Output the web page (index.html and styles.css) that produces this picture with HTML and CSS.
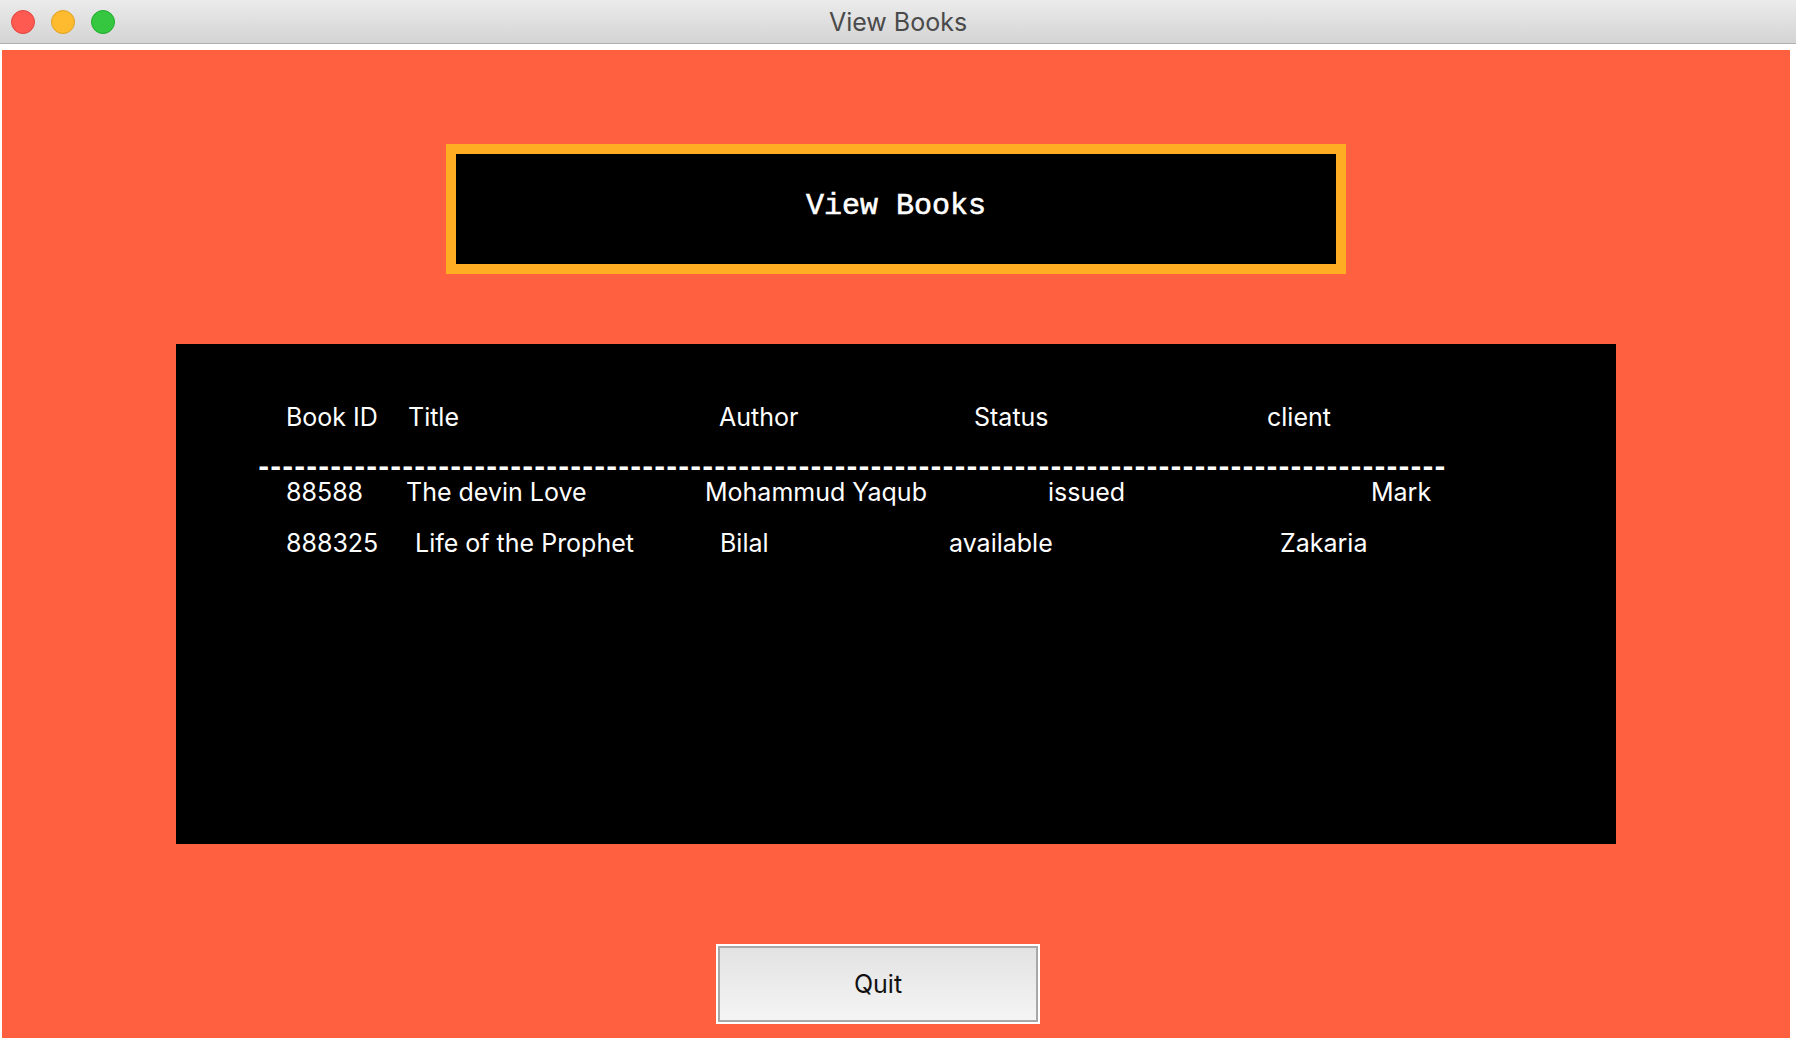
FILE: index.html
```html
<!DOCTYPE html>
<html>
<head>
<meta charset="utf-8">
<title>View Books</title>
<link rel="stylesheet" href="styles.css">
</head>
<body>
<div class="window">
  <div class="titlebar">
    <div class="lights">
      <span class="light red"></span>
      <span class="light yellow"></span>
      <span class="light green"></span>
    </div>
    <div class="wintitle">View Books</div>
  </div>
  <div class="canvas">
    <div class="heading"><span class="heading-text">View Books</span></div>
    <div class="table">
      <div class="row row-head">
        <span>Book ID</span><span>Title</span><span>Author</span><span>Status</span><span>client</span>
      </div>
      <div class="dashes">---------------------------------------------------------------------------------------------------</div>
      <div class="row row-1">
        <span>88588</span><span>The devin Love</span><span>Mohammud Yaqub</span><span>issued</span><span>Mark</span>
      </div>
      <div class="row row-2">
        <span>888325</span><span>Life of the Prophet</span><span>Bilal</span><span>available</span><span>Zakaria</span>
      </div>
    </div>
    <button class="quit">Quit</button>
  </div>
</div>
</body>
</html>
```
FILE: styles.css
```css
html, body {
  margin: 0;
  padding: 0;
  background: #ffffff;
}
.window {
  width: 1796px;
  height: 1044px;
  background: #ffffff;
  overflow: hidden;
}
.titlebar {
  position: relative;
  height: 43px;
  background: linear-gradient(#ebebeb, #d4d4d4);
  border-bottom: 1px solid #b0b0b0;
  display: flex;
  align-items: center;
  justify-content: center;
}
.lights {
  position: absolute;
  left: 11px;
  top: 10px;
  display: flex;
  gap: 16px;
}
.light {
  width: 22px;
  height: 22px;
  border-radius: 50%;
  display: block;
}
.red { background: #ff5a52; border: 1px solid #e0443e; }
.yellow { background: #ffbb2f; border: 1px solid #dea123; }
.green { background: #35c73f; border: 1px solid #1eab2b; }
.wintitle {
  font-family: Inter, "Noto Sans", sans-serif;
  font-size: 25px;
  color: #4a4a4a;
  padding-top: 1px;
  line-height: 43px;
}
.canvas {
  margin: 6px 6px 0 2px;
  height: 988px;
  box-sizing: border-box;
  background: #ff603f;
  display: flex;
  flex-direction: column;
  align-items: flex-start;
  padding-top: 94px;
}
.heading {
  margin-left: 444px;
  width: 900px;
  height: 130px;
  box-sizing: border-box;
  border: 10px solid #ffad23;
  background: #000000;
  display: flex;
  align-items: center;
  justify-content: center;
  padding-bottom: 6px;
}
.heading-text {
  font-family: "Liberation Mono", "Courier New", monospace;
  font-size: 30px;
  color: #ffffff;
  line-height: 36px;
  -webkit-text-stroke: 0.6px #ffffff;
}
.table {
  margin-top: 70px;
  margin-left: 174px;
  width: 1440px;
  height: 500px;
  box-sizing: border-box;
  background: #000000;
  padding-top: 58px;
  color: #ffffff;
  font-family: Inter, "Noto Sans", sans-serif;
  font-size: 25px;
}
.row {
  display: grid;
  height: 30px;
  line-height: 30px;
  padding-left: 110px;
  white-space: nowrap;
}
.row-head { grid-template-columns: 122px 311px 255px 293px auto; }
.row-1 { grid-template-columns: 120px 299px 343px 323px auto; }
.row-2 { grid-template-columns: 129px 305px 229px 331px auto; margin-top: 21px; }
.dashes {
  margin-top: 28px;
  padding-left: 79px;
  height: 17px;
  line-height: 17px;
  font-family: "Liberation Mono", monospace;
  font-weight: bold;
  font-size: 29px;
  letter-spacing: -5.4px;
  white-space: nowrap;
}
.quit {
  margin-top: 100px;
  margin-left: 714px;
  width: 324px;
  height: 80px;
  box-sizing: border-box;
  border: 2px solid #ffffff;
  box-shadow: inset 0 0 0 2px #a8a8a8;
  background: linear-gradient(#e2e2e2, #f5f5f5);
  font-family: Inter, "Noto Sans", sans-serif;
  font-size: 25px;
  color: #111111;
  padding: 0;
}
```
